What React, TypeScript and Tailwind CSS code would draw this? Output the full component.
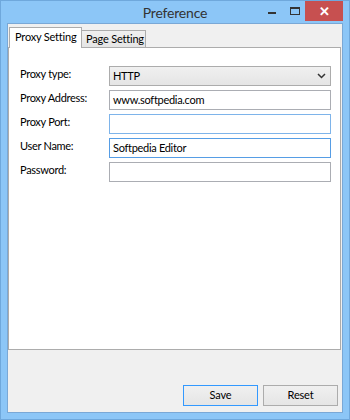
import React from "react";

const font = { fontFamily: 'Lato, "Liberation Sans", sans-serif' };

function Field({ label, value, border }: { label: string; value?: string; border: string }) {
  return (
    <div className="flex h-[20px] items-start">
      <div className="w-[100px] whitespace-nowrap pl-[11px] text-[11px] leading-[16px] tracking-[-0.3px] text-black">{label}</div>
      <div className={`h-[20px] w-[222px] whitespace-nowrap border bg-white px-[3px] text-[11px] leading-[18px] tracking-[-0.3px] text-black ${border}`}>{value}</div>
    </div>
  );
}

export default function App() {
  return (
    <div className="h-[420px] w-[350px] overflow-hidden border border-[#6fa8dc] bg-[#8cc6f7]" style={font}>
      <div className="relative flex h-[22px] items-start">
        <div className="absolute left-0 right-0 top-[2px] text-center text-[14px] leading-[20px] tracking-[-0.2px] text-[#333]">Preference</div>
        <div className="ml-auto flex items-start">
          <div className="flex h-[20px] w-[26px] items-center justify-center">
            <div className="mt-[4px] h-[2px] w-[8px] bg-[#333]" />
          </div>
          <div className="flex h-[20px] w-[20px] items-center justify-center">
            <div className="h-[8px] w-[10px] border border-t-[2px] border-[#333]" />
          </div>
          <div className="mr-[6px] flex h-[20px] w-[38px] items-center justify-center bg-[#c75050] text-[13px] font-bold leading-none text-white">
            ✕
          </div>
        </div>
      </div>
      <div className="mx-[6px] flex h-[390px] flex-col border border-[#7aa8d6] bg-[#f0f0f0]">
        <div className="mt-[3px] flex h-[20px] items-end pl-[1px]">
          <div className="relative z-10 -mb-[1px] h-[21px] w-[73px] whitespace-nowrap border border-b-0 border-[#acacac] bg-white pl-[5px] text-[11px] leading-[18px] tracking-[-0.2px] text-black">
            Proxy Setting
          </div>
          <div className="h-[17px] w-[64px] whitespace-nowrap border border-b-0 border-l-0 border-[#acacac] bg-gradient-to-b from-[#f0f0f0] to-[#e5e5e5] pl-[4px] text-[11px] leading-[16px] tracking-[-0.2px] text-black">
            Page Setting
          </div>
        </div>
        <div className="mr-[1px] flex h-[303px] flex-col gap-[4px] border border-[#acacac] bg-white pt-[18px]">
          <div className="flex h-[20px] items-start">
            <div className="w-[100px] whitespace-nowrap pl-[11px] text-[11px] leading-[16px] tracking-[-0.3px] text-black">Proxy type:</div>
            <div className="flex h-[20px] w-[222px] items-center justify-between border border-[#acacac] bg-gradient-to-b from-[#f0f0f0] to-[#e5e5e5] px-[3px] text-[11px] leading-[18px] tracking-[-0.3px] text-black">
              <span>HTTP</span>
              <svg width="9" height="6" viewBox="0 0 9 6" className="mr-[1px]">
                <path d="M1 1 L4.5 4.5 L8 1" fill="none" stroke="#333" strokeWidth="1.5" />
              </svg>
            </div>
          </div>
          <Field label="Proxy Address:" value="www.softpedia.com" border="border-[#abadb3]" />
          <Field label="Proxy Port:" border="border-[#7eb4ea]" />
          <Field label="User Name:" value="Softpedia Editor" border="border-[#569de5]" />
          <Field label="Password:" border="border-[#abadb3]" />
        </div>
        <div className="mt-auto mb-[6px] flex justify-end gap-[5px] pr-[4px]">
          <div className="flex h-[21px] w-[75px] items-center justify-center border border-[#3399ff] bg-gradient-to-b from-[#f0f0f0] to-[#e5e5e5] text-[11px] tracking-[-0.2px] text-black">
            Save
          </div>
          <div className="flex h-[21px] w-[75px] items-center justify-center border border-[#acacac] bg-gradient-to-b from-[#f0f0f0] to-[#e5e5e5] text-[11px] tracking-[-0.2px] text-black">
            Reset
          </div>
        </div>
      </div>
    </div>
  );
}
